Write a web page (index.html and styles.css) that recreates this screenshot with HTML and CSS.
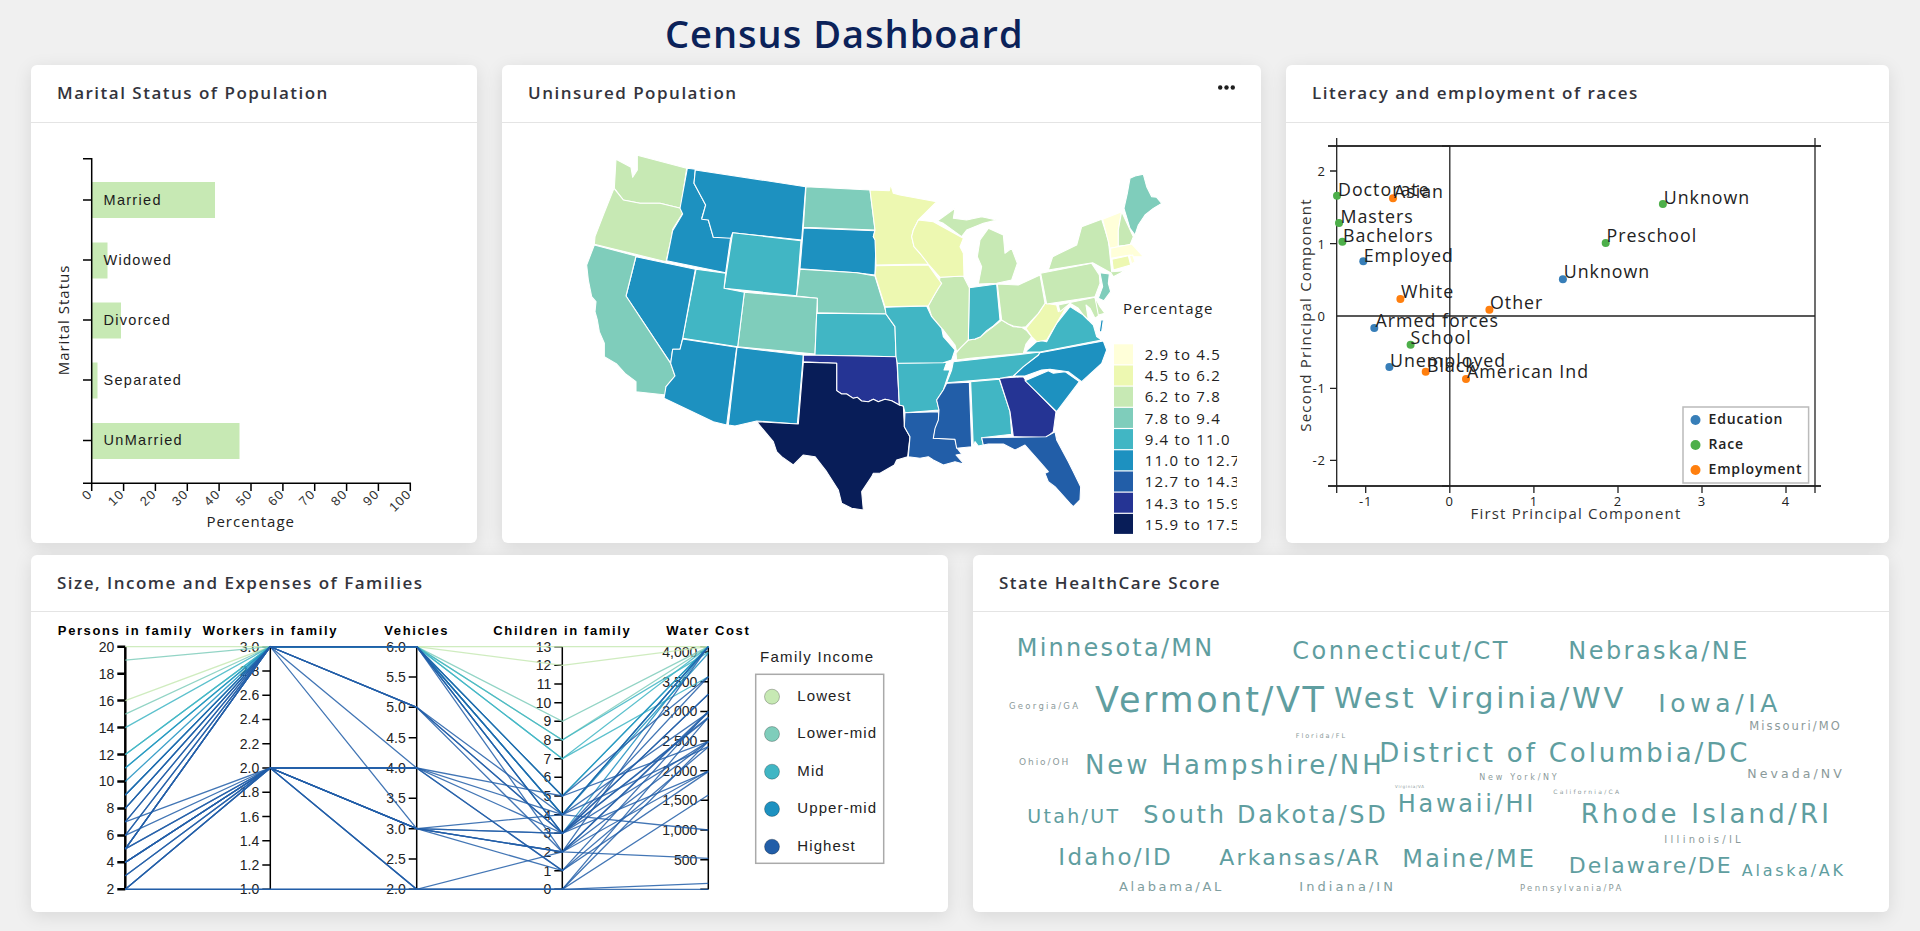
FILE: index.html
```html
<!DOCTYPE html>
<html lang="en">
  <head>
    <meta charset="UTF-8" />
    <meta name="viewport" content="width=device-width, initial-scale=1.0" />
    <title>Census Dashboard</title>
    <link rel="stylesheet" href="styles.css">
  </head>

  <body>
    <h1 class="page-title">Census Dashboard</h1>

    <section class="row row-top">
      <div class="card">
        <div class="card-header"><h2>Marital Status of Population</h2></div>
        <div class="card-body">
          <svg class="chart" viewBox="31 123 446 420">
            <g class="bars">
              <rect x="92" y="182" width="123" height="36" />
              <rect x="92" y="242.5" width="15.5" height="36" />
              <rect x="92" y="302.5" width="29" height="36" />
              <rect x="92" y="362.5" width="5.5" height="36" />
              <rect x="92" y="423" width="147.5" height="36" />
            </g>
            <path class="axis" d="M83 158.7H91.7V483.3M83 200H91.7M83 260H91.7M83 320H91.7M83 380H91.7M83 440.5H91.7M83 483.3H410.3V491M91.7 483.3V491M123.6 483.3V491M155.4 483.3V491M187.3 483.3V491M219.1 483.3V491M251 483.3V491M282.9 483.3V491M314.7 483.3V491M346.6 483.3V491M378.4 483.3V491" />
            <g class="bar-name">
              <text x="103.5" y="205">Married</text>
              <text x="103.5" y="265">Widowed</text>
              <text x="103.5" y="325">Divorced</text>
              <text x="103.5" y="385">Separated</text>
              <text x="103.5" y="445">UnMarried</text>
            </g>
            <g class="tick-rot">
              <text x="93" y="495" transform="rotate(-45 93 495)">0</text>
              <text x="125" y="495" transform="rotate(-45 125 495)">10</text>
              <text x="157" y="495" transform="rotate(-45 157 495)">20</text>
              <text x="189" y="495" transform="rotate(-45 189 495)">30</text>
              <text x="221" y="495" transform="rotate(-45 221 495)">40</text>
              <text x="253" y="495" transform="rotate(-45 253 495)">50</text>
              <text x="285" y="495" transform="rotate(-45 285 495)">60</text>
              <text x="316" y="495" transform="rotate(-45 316 495)">70</text>
              <text x="348" y="495" transform="rotate(-45 348 495)">80</text>
              <text x="380" y="495" transform="rotate(-45 380 495)">90</text>
              <text x="412" y="495" transform="rotate(-45 412 495)">100</text>
            </g>
            <text class="axis-title" x="250.7" y="527" text-anchor="middle">Percentage</text>
            <text class="axis-title" x="0" y="0" text-anchor="middle" transform="translate(68.5 320) rotate(-90)">Marital Status</text>
          </svg>
        </div>
      </div>

      <div class="card">
        <div class="card-header">
          <h2>Uninsured Population</h2>
          <svg class="dots" viewBox="0 0 17 5" width="17" height="5"><circle cx="2.2" cy="2.5" r="2.2" /><circle cx="8.5" cy="2.5" r="2.2" /><circle cx="14.8" cy="2.5" r="2.2" /></svg>
        </div>
        <div class="card-body map-body">
          <svg class="chart" viewBox="527 123 710 420">
            <g class="states" transform="translate(560 140) scale(.33333)">
              <polygon class="q2" points="168,58 213,82 218,112 232,90 232,46 380,85 362,205 300,190 240,190 190,180 163,145" />
              <polygon class="q2" points="162,145 190,180 240,190 300,190 362,205 368,220 338,268 335,290 318,365 103,313 105,290 130,225" />
              <polygon class="q5" points="382,85 406,88 402,130 437,195 425,235 445,240 460,292 510,292 513,285 497,398 320,362 338,272 368,222 360,205" />
              <polygon class="q5" points="406,90 737,140 725,300 518,278 512,295 460,292 445,240 425,238 437,195 402,130" />
              <polygon class="q4" points="518,278 723,302 710,467 492,445" />
              <polygon class="q3" points="738,140 930,150 945,270 730,262" />
              <polygon class="q5" points="730,264 945,272 940,290 948,300 945,405 890,398 720,386" />
              <polygon class="q3" points="720,388 890,398 945,408 980,522 772,518 772,475 710,468" />
              <polygon class="q3" points="553,457 772,475 765,642 533,620" />
              <polygon class="q4" points="770,520 978,522 1005,560 1008,650 765,645" />
              <polygon class="q4" points="408,388 497,400 492,445 553,457 533,620 368,595" />
              <polygon class="q5" points="228,350 406,388 368,595 360,628 338,628 332,670 198,468" />
              <polygon class="q3" points="103,315 228,348 198,468 332,670 345,708 318,740 318,765 228,755 228,725 195,700 170,672 133,650 133,610 118,575 112,540 105,515 108,485 95,470 85,420 80,375" />
              <polygon class="q5" points="368,597 530,622 500,855 460,845 312,775 318,740 345,708 332,670 338,628 360,628" />
              <polygon class="q5" points="531,622 730,645 712,852 590,843 525,858 505,855" />
              <polygon class="q7" points="730,645 1010,650 1018,795 995,782 975,778 955,785 940,778 925,785 905,783 892,772 880,775 860,762 845,762 830,752 830,670 730,665" />
              <polygon class="q8" points="730,667 830,670 830,752 845,762 860,762 880,775 892,772 905,783 925,785 940,778 955,785 975,778 995,782 1018,795 1030,798 1033,860 1050,890 1043,950 1010,960 1003,975 960,1000 940,1000 935,1010 905,1055 910,1110 875,1105 845,1090 835,1050 800,995 765,950 730,945 700,975 665,950 650,935 640,905 590,845 715,852" />
              <polygon class="q4" points="1012,670 1160,667 1152,690 1170,690 1150,750 1130,780 1137,810 1035,818 1030,798 1018,795" />
              <polygon class="q6" points="1035,818 1135,815 1137,840 1128,860 1120,895 1185,898 1192,925 1205,942 1188,945 1213,973 1185,965 1150,975 1120,960 1105,950 1080,955 1045,950 1050,890 1033,860" />
              <polygon class="q6" points="1160,730 1228,727 1235,920 1190,925 1185,898 1120,895 1125,865 1135,840 1137,810 1130,780 1150,750" />
              <polygon class="q4" points="1232,725 1318,718 1350,815 1355,883 1265,893 1270,915 1255,918 1245,905 1240,922" />
              <polygon class="q7" points="1318,715 1390,710 1400,725 1488,815 1480,875 1460,893 1360,890 1350,815" />
              <polygon class="q6" points="1265,893 1358,892 1458,890 1485,875 1490,900 1525,965 1540,995 1562,1040 1560,1080 1540,1100 1530,1090 1485,1040 1465,1025 1455,1000 1465,995 1435,960 1395,915 1365,930 1330,912 1285,912 1270,915" />
              <polygon class="q5" points="1395,722 1465,692 1480,700 1515,695 1558,725 1490,815" />
              <polygon class="q5" points="1440,638 1630,603 1640,630 1625,670 1565,725 1525,695 1470,688 1445,690 1395,708 1360,708 1390,680 1435,645" />
              <polygon class="q4" points="1180,665 1410,640 1440,636 1435,645 1390,680 1360,708 1320,715 1160,728 1175,690" />
              <polygon class="q2" points="1190,660 1188,640 1205,618 1225,600 1245,598 1262,590 1280,575 1300,560 1325,540 1345,552 1360,560 1385,562 1400,572 1415,590 1398,612 1390,640 1230,655" />
              <polygon class="q4" points="1395,636 1435,600 1460,605 1490,550 1530,500 1570,525 1600,555 1610,590 1625,600 1440,636" />
              <polygon class="q1" points="1398,565 1435,520 1455,490 1490,495 1495,515 1525,490 1490,550 1460,600 1430,605 1415,590" />
              <polygon class="q2" points="1312,432 1375,435 1440,405 1455,490 1435,520 1398,560 1385,562 1360,558 1345,552 1325,540" />
              <polygon class="q4" points="1228,443 1310,432 1320,540 1300,558 1280,572 1262,590 1245,597 1225,600" />
              <polygon class="q2" points="1140,412 1210,408 1228,443 1225,600 1190,635 1185,615 1150,570 1145,565 1115,530 1105,497 1120,470 1135,445" />
              <polygon class="q4" points="975,502 1100,498 1115,530 1145,565 1150,590 1185,630 1175,660 1150,668 1012,670 1008,650 1005,560 978,522" />
              <polygon class="q1" points="948,377 1105,375 1130,410 1145,430 1135,445 1120,470 1105,497 975,500 945,405" />
              <polygon class="q1" points="930,150 988,152 992,133 1000,160 1020,165 1130,185 1075,240 1060,270 1055,290 1062,320 1080,340 1105,372 948,375 945,300 940,290 945,270" />
              <polygon class="q1" points="1075,240 1120,245 1210,295 1200,320 1210,340 1212,408 1140,412 1105,372 1080,340 1062,320 1055,290 1060,270" />
              <polygon class="q2" points="1132,243 1185,205 1180,235 1220,240 1265,230 1310,240 1270,250 1220,270 1205,290 1150,250" />
              <polygon class="q2" points="1255,432 1265,380 1252,350 1260,300 1285,265 1330,285 1335,340 1355,325 1372,370 1355,420 1310,430" />
              <polygon class="q2" points="1442,400 1595,370 1618,405 1620,430 1605,470 1460,492" />
              <polygon class="q2" points="1465,390 1478,350 1550,315 1565,260 1625,238 1645,300 1655,395 1695,392 1660,410 1652,398 1598,368" />
              <polygon class="q3" points="1620,398 1648,402 1645,430 1652,455 1632,482 1615,475 1628,440" />
              <polygon class="q0" points="1628,238 1685,215 1675,270 1675,320 1650,325" />
              <polygon class="q2" points="1685,215 1720,290 1710,315 1675,318 1675,270" />
              <polygon class="q3" points="1692,205 1702,160 1710,115 1725,108 1750,103 1760,140 1775,170 1790,172 1805,190 1780,205 1755,225 1735,255 1725,285 1710,265" />
              <polygon class="q0" points="1652,325 1715,312 1750,350 1720,350 1710,345 1652,355" />
              <polygon class="q1" points="1656,358 1705,347 1712,375 1660,390" />
              <polygon class="q0" points="1708,347 1718,345 1725,365 1715,372" />
              <polygon class="q2" points="1495,495 1605,472 1618,525 1605,535 1590,505 1578,495 1585,540 1570,525 1555,505 1530,490 1500,515" />
              <polygon class="q2" points="1605,472 1620,500 1635,520 1615,525" />
              <polygon class="q5" points="1623,540 1630,540 1625,575 1618,575" />
            </g>
            <text class="map-legend-title" x="1123" y="314">Percentage</text>
            <g class="map-legend">
              <rect class="q0" x="1114" y="344.3" width="19" height="20" /><text x="1144.7" y="360">2.9 to 4.5</text>
              <rect class="q1" x="1114" y="365.5" width="19" height="20" /><text x="1144.7" y="381">4.5 to 6.2</text>
              <rect class="q2" x="1114" y="386.7" width="19" height="20" /><text x="1144.7" y="402">6.2 to 7.8</text>
              <rect class="q3" x="1114" y="407.9" width="19" height="20" /><text x="1144.7" y="424">7.8 to 9.4</text>
              <rect class="q4" x="1114" y="429.1" width="19" height="20" /><text x="1144.7" y="445">9.4 to 11.0</text>
              <rect class="q5" x="1114" y="450.3" width="19" height="20" /><text x="1144.7" y="466">11.0 to 12.7</text>
              <rect class="q6" x="1114" y="471.5" width="19" height="20" /><text x="1144.7" y="487">12.7 to 14.3</text>
              <rect class="q7" x="1114" y="492.7" width="19" height="20" /><text x="1144.7" y="509">14.3 to 15.9</text>
              <rect class="q8" x="1114" y="513.9" width="19" height="20" /><text x="1144.7" y="530">15.9 to 17.5</text>
            </g>
          </svg>
        </div>
      </div>

      <div class="card">
        <div class="card-header"><h2>Literacy and employment of races</h2></div>
        <div class="card-body">
          <svg class="chart" viewBox="1286 123 603 420">
            <path class="frame" d="M1328 146H1821M1328 486H1821" />
            <path class="frame-thin" d="M1336.7 138V493M1815 138V493M1336.7 316H1815M1449.8 146V486M1442 146H1450M1442 486H1450M1330 171H1337M1330 243.7H1337M1330 388.3H1337M1330 460.3H1337M1365.7 486V493M1449.8 486V493M1533.9 486V493M1618 486V493M1702 486V493M1786 486V493" />
            <g class="pca-tick">
              <text x="1326" y="176" text-anchor="end">2</text>
              <text x="1326" y="248.5" text-anchor="end">1</text>
              <text x="1326" y="321" text-anchor="end">0</text>
              <text x="1326" y="393" text-anchor="end">-1</text>
              <text x="1326" y="465" text-anchor="end">-2</text>
              <text x="1365.7" y="506" text-anchor="middle">-1</text>
              <text x="1449.8" y="506" text-anchor="middle">0</text>
              <text x="1533.9" y="506" text-anchor="middle">1</text>
              <text x="1618" y="506" text-anchor="middle">2</text>
              <text x="1702" y="506" text-anchor="middle">3</text>
              <text x="1786" y="506" text-anchor="middle">4</text>
            </g>
            <text class="pca-title" x="1576" y="519" text-anchor="middle">First Principal Component</text>
            <text class="pca-title" x="0" y="0" text-anchor="middle" transform="translate(1311 315) rotate(-90)">Second Principal Component</text>
            <g>
              <circle class="dot-green" cx="1337" cy="195.7" r="4" />
              <circle class="dot-orange" cx="1393" cy="198.3" r="4" />
              <circle class="dot-green" cx="1339" cy="223" r="4" />
              <circle class="dot-green" cx="1342.4" cy="241.7" r="4" />
              <circle class="dot-blue" cx="1363.3" cy="261.3" r="4" />
              <circle class="dot-orange" cx="1400.4" cy="299" r="4" />
              <circle class="dot-orange" cx="1489.4" cy="309.7" r="4" />
              <circle class="dot-blue" cx="1374.3" cy="328" r="4" />
              <circle class="dot-green" cx="1410.6" cy="344.7" r="4" />
              <circle class="dot-blue" cx="1389.4" cy="367" r="4" />
              <circle class="dot-orange" cx="1425.7" cy="371.7" r="4" />
              <circle class="dot-orange" cx="1466" cy="379" r="4" />
              <circle class="dot-green" cx="1662.9" cy="204" r="4" />
              <circle class="dot-green" cx="1605.7" cy="243" r="4" />
              <circle class="dot-blue" cx="1562.9" cy="279.3" r="4" />
            </g>
            <g class="pca-name">
              <text x="1338" y="196">Doctorate</text>
              <text x="1394" y="198">Asian</text>
              <text x="1340.4" y="223">Masters</text>
              <text x="1343" y="241.5">Bachelors</text>
              <text x="1363.7" y="261.5">Employed</text>
              <text x="1401" y="298">White</text>
              <text x="1490" y="309">Other</text>
              <text x="1375.5" y="327">Armed forces</text>
              <text x="1410.6" y="344">School</text>
              <text x="1390" y="366.5">Unemployed</text>
              <text x="1427" y="371.5">Black</text>
              <text x="1467" y="378">American Ind</text>
              <text x="1663.7" y="203.5">Unknown</text>
              <text x="1606.5" y="242">Preschool</text>
              <text x="1563.7" y="278">Unknown</text>
            </g>
            <rect class="pca-legend" x="1683" y="407" width="125.6" height="76" />
            <circle class="dot-blue" cx="1695.5" cy="420" r="5" />
            <circle class="dot-green" cx="1695.5" cy="445" r="5" />
            <circle class="dot-orange" cx="1695.5" cy="470" r="5" />
            <g class="pca-legend-name">
              <text x="1708.6" y="424">Education</text>
              <text x="1708.6" y="449">Race</text>
              <text x="1708.6" y="474">Employment</text>
            </g>
          </svg>
        </div>
      </div>
    </section>

    <section class="row row-bottom">
      <div class="card">
        <div class="card-header"><h2>Size, Income and Expenses of Families</h2></div>
        <div class="card-body">
          <svg class="chart" id="parallel" viewBox="31 612 917 300">
            <g id="parallel-axes"></g>
            <g id="parallel-lines"></g>
            <text class="income-title" x="760" y="661.5">Family Income</text>
            <rect class="income-box" x="755.7" y="674.3" width="128" height="189" />
            <circle class="income-dot lv0" cx="772" cy="696.7" r="7.5" />
            <circle class="income-dot lv1" cx="772" cy="734" r="7.5" />
            <circle class="income-dot lv2" cx="772" cy="771.7" r="7.5" />
            <circle class="income-dot lv3" cx="772" cy="809" r="7.5" />
            <circle class="income-dot lv4" cx="772" cy="846.7" r="7.5" />
            <g class="income-name">
              <text x="797.3" y="701">Lowest</text>
              <text x="797.3" y="738">Lower-mid</text>
              <text x="797.3" y="776">Mid</text>
              <text x="797.3" y="813">Upper-mid</text>
              <text x="797.3" y="851">Highest</text>
            </g>
          </svg>
        </div>
      </div>

      <div class="card">
        <div class="card-header"><h2>State HealthCare Score</h2></div>
        <div class="card-body">
          <svg class="chart" viewBox="973 612 916 300">
            <g class="cloud">
              <text x="1016.7" y="656" font-size="24" textLength="196.6">Minnesota/MN</text>
              <text x="1292.3" y="659.3" font-size="24" textLength="216">Connecticut/CT</text>
              <text x="1568.3" y="659.3" font-size="24" textLength="180">Nebraska/NE</text>
              <text class="faint" x="1009" y="709.3" font-size="8.5" textLength="70">Georgia/GA</text>
              <text x="1095" y="711.7" font-size="35" textLength="230">Vermont/VT</text>
              <text x="1334" y="708.3" font-size="29" textLength="290.3">West Virginia/WV</text>
              <text x="1658.3" y="711.7" font-size="25" textLength="120">Iowa/IA</text>
              <text class="faint" x="1749.3" y="730" font-size="11.5" textLength="91.4">Missouri/MO</text>
              <text class="faint" x="1295.7" y="738" font-size="6.5" textLength="50.3">Florida/FL</text>
              <text x="1379.3" y="761.7" font-size="26" textLength="369">District of Columbia/DC</text>
              <text class="faint" x="1019" y="765.3" font-size="9" textLength="50.3">Ohio/OH</text>
              <text x="1085" y="774.3" font-size="26" textLength="297.7">New Hampshire/NH</text>
              <text class="faint" x="1479.3" y="780.3" font-size="8" textLength="78.4">New York/NY</text>
              <text class="faint" x="1747.3" y="778" font-size="12.5" textLength="95.4">Nevada/NV</text>
              <text class="faint" x="1395" y="788" font-size="4" textLength="30">Virginia/VA</text>
              <text class="faint" x="1553.3" y="794" font-size="6" textLength="66.7">California/CA</text>
              <text x="1397.7" y="811.7" font-size="24" textLength="136.6">Hawaii/HI</text>
              <text x="1027.3" y="823.3" font-size="19" textLength="91.7">Utah/UT</text>
              <text x="1143.3" y="822.7" font-size="24" textLength="243.4">South Dakota/SD</text>
              <text x="1580.7" y="822.7" font-size="26" textLength="249.3">Rhode Island/RI</text>
              <text class="faint" x="1664.3" y="843.3" font-size="10" textLength="77.4">Illinois/IL</text>
              <text x="1058.3" y="865" font-size="23" textLength="113.4">Idaho/ID</text>
              <text x="1219.3" y="865" font-size="22" textLength="160.7">Arkansas/AR</text>
              <text x="1402.3" y="867.3" font-size="24" textLength="132.7">Maine/ME</text>
              <text x="1568.7" y="872.7" font-size="22" textLength="163">Delaware/DE</text>
              <text x="1741.7" y="875.7" font-size="16" textLength="102.3">Alaska/AK</text>
              <text class="soft" x="1119" y="891" font-size="13" textLength="103.3">Alabama/AL</text>
              <text class="soft" x="1299.3" y="891" font-size="13" textLength="94.7">Indiana/IN</text>
              <text class="faint" x="1520" y="891" font-size="8.5" textLength="102.3">Pennsylvania/PA</text>
            </g>
          </svg>
        </div>
      </div>
    </section>

    <script src="charts.js"></script>
  </body>
</html>
```

FILE: styles.css
```css
body {
  margin: 0;
  padding: 0 31px 19px;
  background-color: #f0f0f0;
  font-family: "Open Sans", sans-serif;
  letter-spacing: 1px;
  color: #212529;
}

.page-title {
  margin: 0;
  height: 65px;
  padding-left: 634px;
  line-height: 66px;
  font-size: 38px;
  font-weight: 600;
  color: #0b2259;
  box-sizing: border-box;
}

.row {
  display: grid;
  gap: 25px;
}

.row-top {
  grid-template-columns: 446px 759px 603px;
  height: 478px;
  margin-bottom: 12px;
}

.row-bottom {
  grid-template-columns: 917px 916px;
  height: 357px;
}

.card {
  display: flex;
  flex-direction: column;
  background-color: #fff;
  border-radius: 6px;
  box-shadow: 0 4px 18px rgba(0, 0, 0, 0.1);
  overflow: hidden;
}

.card-header {
  display: flex;
  justify-content: space-between;
  flex: 0 0 auto;
  height: 58px;
  padding: 0 26px;
  box-sizing: border-box;
  border-bottom: 1px solid #e4e4e4;
}

.row-bottom .card-header {
  height: 57px;
}

.card-header h2 {
  margin: 0;
  line-height: 56px;
  font-size: 17px;
  font-weight: 600;
  letter-spacing: 1.5px;
  color: #33343c;
}

.dots {
  margin-top: 20px;
  fill: #1f1f1f;
}

.card-body {
  flex: 1;
  min-height: 0;
}

.map-body {
  padding: 0 24px 0 25px;
}

.chart {
  display: block;
  width: 100%;
  height: 100%;
}

/* marital status */
.bars rect {
  fill: #c7e9b4;
}

.axis {
  fill: none;
  stroke: #000;
  stroke-width: 1.5;
}

.bar-name text {
  font-family: "Liberation Sans", sans-serif;
  font-size: 14.5px;
  letter-spacing: 1.3px;
  fill: #1c1c1c;
}

.tick-rot text {
  font-family: "Liberation Sans", sans-serif;
  font-size: 13px;
  fill: #333;
  text-anchor: end;
}

.axis-title {
  font-size: 15px;
  fill: #222;
}

/* map */
.states polygon {
  stroke: #fff;
  stroke-width: 3.2;
  stroke-linejoin: round;
}

.q0 { fill: #ffffd9; }
.q1 { fill: #edf8b1; }
.q2 { fill: #c7e9b4; }
.q3 { fill: #7fcdbb; }
.q4 { fill: #41b6c4; }
.q5 { fill: #1d91c0; }
.q6 { fill: #225ea8; }
.q7 { fill: #253494; }
.q8 { fill: #081d58; }

.map-legend-title {
  font-size: 15px;
  letter-spacing: 1.2px;
  fill: #222;
}

.map-legend text {
  font-size: 15px;
  letter-spacing: 1.2px;
  fill: #222;
}

/* pca scatter */
.frame {
  fill: none;
  stroke: #333;
  stroke-width: 2;
}

.frame-thin {
  fill: none;
  stroke: #222;
  stroke-width: 1.3;
}

.pca-tick text {
  font-size: 13px;
  fill: #222;
}

.pca-title {
  font-size: 15px;
  letter-spacing: 1.2px;
  fill: #333;
}

.pca-name text {
  font-size: 17.8px;
  fill: #222;
}

.dot-blue { fill: #377eb8; }
.dot-green { fill: #4daf4a; }
.dot-orange { fill: #ff7f0e; }

.pca-legend {
  fill: #fff;
  stroke: #bbb;
  stroke-width: 1.5;
}

.pca-legend-name text {
  font-size: 14px;
  font-weight: 600;
  letter-spacing: 0.8px;
  fill: #222;
}

/* parallel coordinates */
.par-axis {
  fill: none;
  stroke: #000;
  stroke-width: 1.5;
}

.par-axis-first {
  stroke-width: 2.5;
}

.par-tick {
  font-family: "Liberation Sans", sans-serif;
  font-size: 14px;
  letter-spacing: 0;
  fill: #222;
  text-anchor: end;
}

.par-name {
  font-family: "Liberation Sans", sans-serif;
  font-size: 13px;
  font-weight: 700;
  letter-spacing: 1.6px;
  fill: #000;
  text-anchor: middle;
}

.par-line {
  fill: none;
  stroke-width: 1.3;
  stroke-opacity: 0.85;
}

.lv0 { fill: #c7e9b4; stroke: #c7e9b4; }
.lv1 { fill: #7fcdbb; stroke: #7fcdbb; }
.lv2 { fill: #41b6c4; stroke: #41b6c4; }
.lv3 { fill: #1d91c0; stroke: #1d91c0; }
.lv4 { fill: #225ea8; stroke: #225ea8; }

.par-line.lv0, .par-line.lv1, .par-line.lv2, .par-line.lv3, .par-line.lv4 {
  fill: none;
}

.income-title {
  font-family: "Liberation Sans", sans-serif;
  font-size: 15px;
  letter-spacing: 1.3px;
  fill: #222;
}

.income-box {
  fill: none;
  stroke: #aaa;
  stroke-width: 1.5;
}

.income-dot {
  stroke: rgba(0, 0, 0, 0.25);
  stroke-width: 1;
}

.income-name text {
  font-family: "Liberation Sans", sans-serif;
  font-size: 15px;
  letter-spacing: 1.1px;
  fill: #222;
}

/* word cloud */
.cloud text {
  font-family: "DejaVu Sans", sans-serif;
  fill: #5f9ea0;
}

.cloud .soft {
  fill: #7f9ea0;
}

.cloud .faint {
  fill: #8b9a9a;
}
```

FILE: charts.js
```js
const NS = "http://www.w3.org/2000/svg";
const TOP = 646.7;
const BOTTOM = 889.3;

function scale(min, max) {
  return (v) => BOTTOM - ((v - min) / (max - min)) * (BOTTOM - TOP);
}

function range(from, to, step) {
  const out = [];
  for (let v = from; v <= to + step / 2; v += step) out.push(v);
  return out;
}

const waterY = (v) => BOTTOM - v * 0.0593;

const dims = [
  { name: "Persons in family", x: 125.3, y: scale(2, 20), ticks: range(2, 20, 2), fmt: (v) => v },
  { name: "Workers in family", x: 270.3, y: scale(1, 3), ticks: range(1, 3, 0.2), fmt: (v) => v.toFixed(1) },
  { name: "Vehicles", x: 416.7, y: scale(2, 6), ticks: range(2, 6, 0.5), fmt: (v) => v.toFixed(1) },
  { name: "Children in family", x: 562.3, y: scale(0, 13), ticks: range(0, 13, 1), fmt: (v) => v },
  { name: "Water Cost", x: 708.3, y: waterY, ticks: range(500, 4000, 500), fmt: (v) => v.toLocaleString("en-US") },
];

// persons, workers, vehicles, children, water, income level
const families = [
  [20, 3, 6, 13, 4091, 0],
  [16, 3, 6, 12, 4091, 0],
  [15, 3, 6, 9, 4091, 1],
  [19, 3, 6, 8, 4091, 1],
  [14, 3, 6, 7, 4091, 2],
  [12, 3, 6, 8, 4000, 2],
  [11, 3, 6, 7, 3585, 2],
  [12, 3, 6, 5, 4091, 2],
  [10, 3, 6, 5, 4091, 3],
  [11, 3, 6, 4, 4091, 3],
  [9, 3, 6, 4, 4091, 3],
  [8, 3, 6, 4, 3980, 3],
  [9, 3, 6, 3, 4091, 3],
  [8, 3, 6, 5, 2490, 4],
  [8, 3, 6, 3, 3288, 4],
  [7, 3, 6, 4, 2979, 4],
  [6, 3, 6, 3, 3585, 4],
  [5, 3, 6, 2, 4091, 4],
  [7, 3, 5, 3, 2883, 4],
  [6, 3, 5, 2, 2979, 4],
  [5, 3, 5, 4, 2405, 4],
  [9, 3, 5, 3, 3288, 4],
  [5, 3, 4, 1, 3000, 4],
  [5, 3, 3, 2, 2490, 4],
  [7, 2, 4, 5, 3585, 4],
  [6, 2, 4, 4, 1000, 4],
  [5, 2, 4, 3, 1984, 4],
  [5, 2, 4, 1, 2400, 4],
  [4, 2, 3, 4, 4091, 4],
  [4, 2, 3, 3, 2900, 4],
  [4, 2, 3, 2, 523, 4],
  [3, 2, 3, 1, 1984, 4],
  [4, 2, 3, 3, 2490, 4],
  [2, 2, 3, 2, 3000, 4],
  [2, 2, 2, 2, 2000, 4],
  [2, 2, 2, 0, 1590, 4],
  [3, 2, 2, 0, 2490, 4],
  [2, 1, 2, 0, 2900, 4],
  [2, 1, 2, 0, 100, 4],
  [2, 1, 2, 0, 0, 4],
];

function add(parent, tag, attrs, text) {
  const el = document.createElementNS(NS, tag);
  Object.keys(attrs).forEach((key) => el.setAttribute(key, attrs[key]));
  if (text !== undefined) el.textContent = text;
  parent.appendChild(el);
  return el;
}

const axes = document.getElementById("parallel-axes");
const lines = document.getElementById("parallel-lines");

dims.forEach((dim, i) => {
  let d = `M${dim.x} ${TOP}V${BOTTOM}M${dim.x - 8} ${TOP}H${dim.x}M${dim.x - 8} ${BOTTOM}H${dim.x}`;
  dim.ticks.forEach((v) => {
    const y = dim.y(v);
    d += `M${dim.x - 8} ${y}H${dim.x}`;
    add(axes, "text", { class: "par-tick", x: dim.x - 11, y: y + 5 }, dim.fmt(v));
  });
  add(axes, "path", { class: i === 0 ? "par-axis par-axis-first" : "par-axis", d: d });
  add(axes, "text", { class: "par-name", x: dim.x, y: 635 }, dim.name);
});

families.forEach((row) => {
  const points = dims.map((dim, i) => `${dim.x},${dim.y(row[i])}`).join(" ");
  add(lines, "polyline", { class: `par-line lv${row[5]}`, points: points });
});
```
